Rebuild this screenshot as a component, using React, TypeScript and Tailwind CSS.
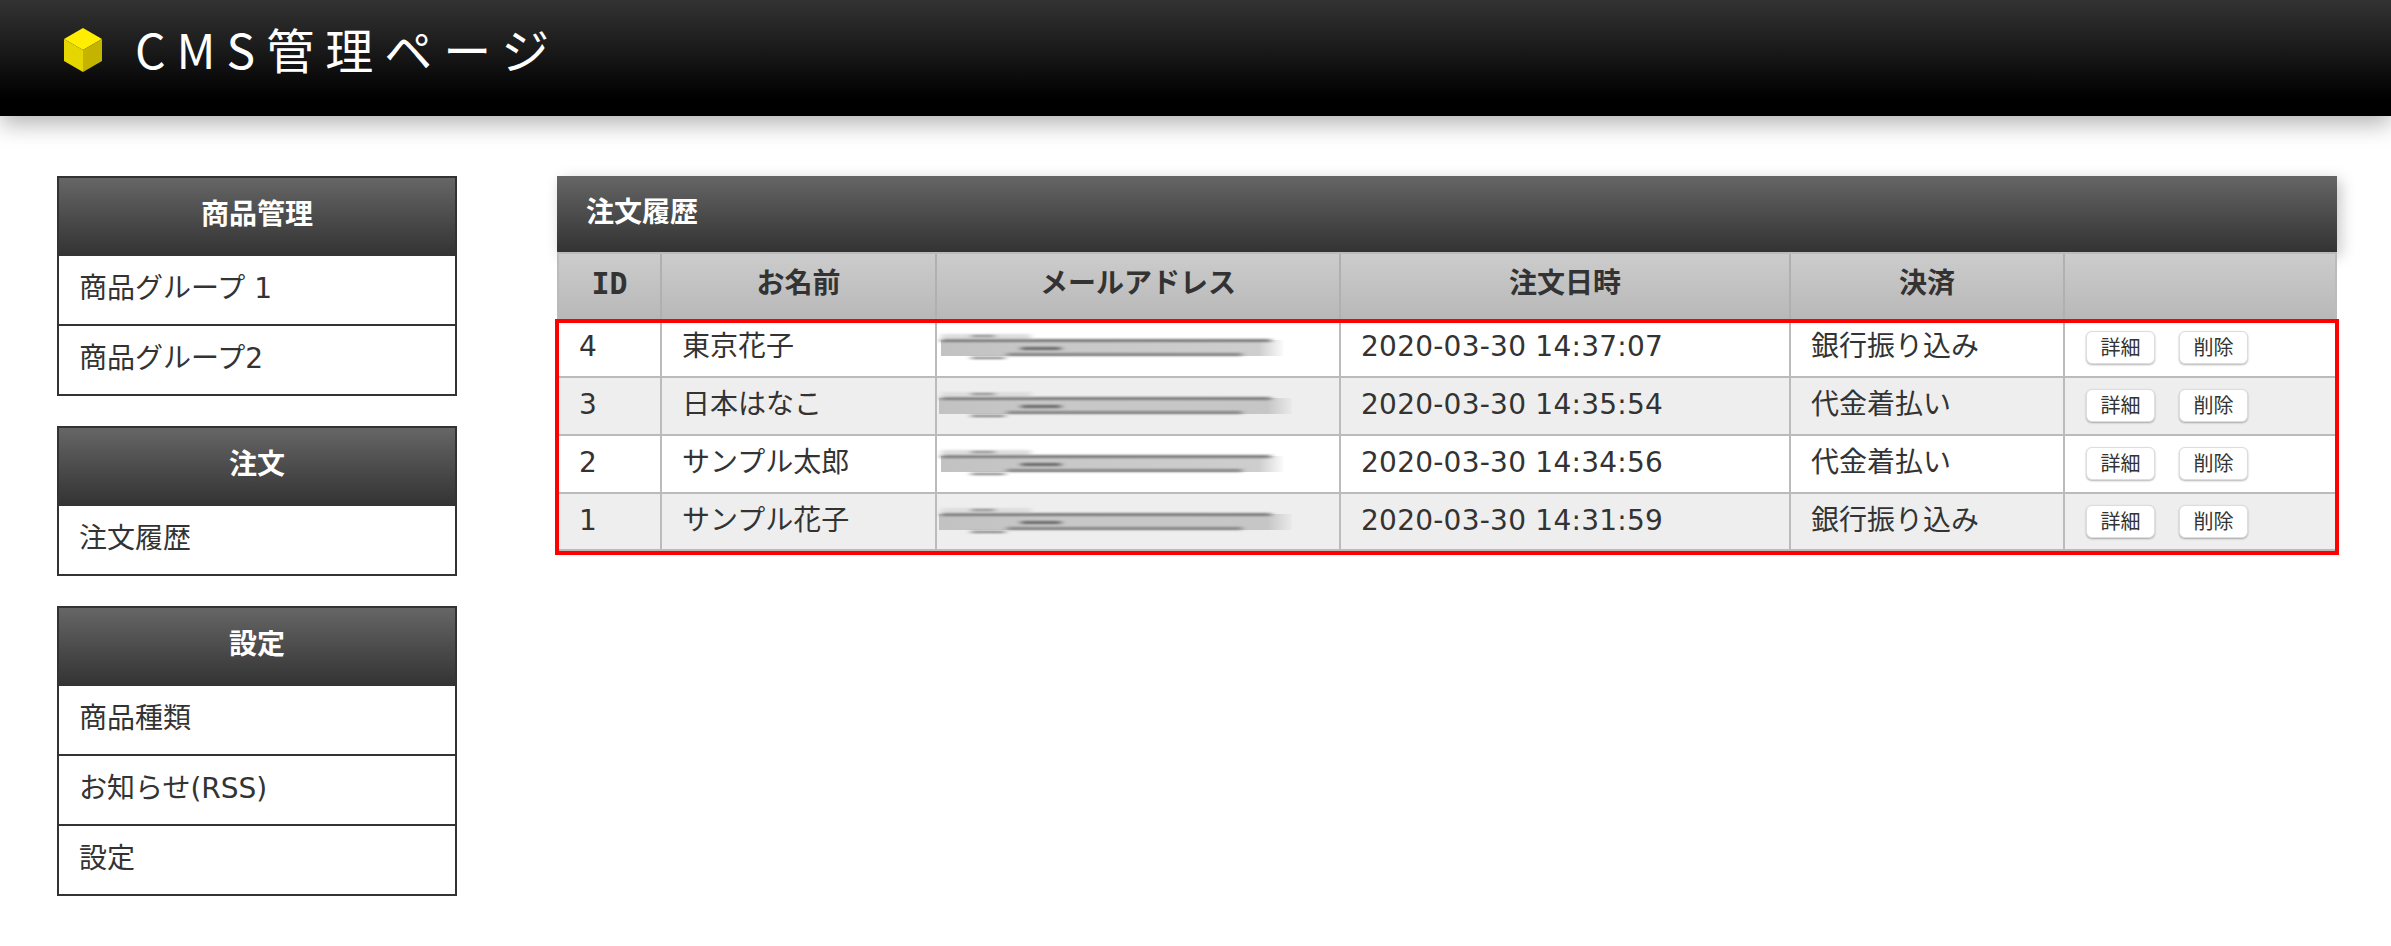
const FONT = "font-['DejaVu_Sans','Noto_Sans_CJK_JP',sans-serif]";

const menus = [
  { title: "商品管理", items: ["商品グループ 1", "商品グループ2"] },
  { title: "注文", items: ["注文履歴"] },
  { title: "設定", items: ["商品種類", "お知らせ(RSS)", "設定"] },
];

const orders = [
  { id: 4, name: "東京花子", date: "2020-03-30 14:37:07", pay: "銀行振り込み" },
  { id: 3, name: "日本はなこ", date: "2020-03-30 14:35:54", pay: "代金着払い" },
  { id: 2, name: "サンプル太郎", date: "2020-03-30 14:34:56", pay: "代金着払い" },
  { id: 1, name: "サンプル花子", date: "2020-03-30 14:31:59", pay: "銀行振り込み" },
];

const COLS = "grid grid-cols-[103px_275px_404px_450px_274px_274px]";
const ROW_HEIGHT = ["h-[55px]", "h-[58px]", "h-[58px]", "h-[57px]"];

function Cube() {
  return (
    <svg width="40" height="44" viewBox="0 0 40 44" className="shrink-0 blur-[0.7px]">
      <polygon points="20,0 39,11 20,22 1,11" fill="#ffee00" />
      <polygon points="1,11 20,22 20,44 1,33" fill="#e6d600" />
      <polygon points="39,11 20,22 20,44 39,33" fill="#c4b400" />
    </svg>
  );
}

// 個人情報をぼかしたメールアドレス欄
function BlurredMail({ shaded }: { shaded: boolean }) {
  const fade = shaded ? "mailfade2" : "mailfade";
  return (
    <svg width="362" height="30" viewBox="0 0 362 30" className="block">
      <defs>
        <filter id="mailblur" x="-3%" y="-40%" width="106%" height="180%">
          <feGaussianBlur stdDeviation="3 0.9" />
        </filter>
        <linearGradient id={fade}>
          <stop offset="0" stopColor="#c2c2c2" />
          <stop offset="0.35" stopColor="#c8c8c8" />
          <stop offset="0.93" stopColor={shaded ? "#c6c6c6" : "#cecece"} />
          <stop offset="1" stopColor={shaded ? "#eaeaea" : "#fafafa"} />
        </linearGradient>
      </defs>
      <rect x={shaded ? 2 : 4} y="8" width={shaded ? 353 : 342} height="16" fill={`url(#${fade})`} />
      <g filter="url(#mailblur)">
        <rect x="4" y="2" width="90" height="5" fill="#dddddd" />
        <rect x="34" y="3" width="24" height="2" fill="#777777" />
        <rect x="4" y="7" width="330" height="3" fill="#7a7a7a" />
        <rect x="84" y="15" width="40" height="3" fill="#666666" />
        <rect x="70" y="21" width="235" height="3" fill="#858585" />
        <rect x="34" y="25" width="34" height="2" fill="#777777" />
      </g>
    </svg>
  );
}

export default function App() {
  return (
    <div className={`min-h-[946px] bg-white text-[28px] leading-none text-[#333] ${FONT}`}>
      <header className="flex h-[116px] items-center gap-[32px] bg-[linear-gradient(#333,#000_86%)] pb-[16px] pl-[63px] shadow-[0_8px_22px_rgba(0,0,0,0.3)]">
        <Cube />
        <h1 className="mb-[4px] font-['Noto_Sans_CJK_JP',sans-serif] text-[48px] font-normal tracking-[11px] text-white">
          CMS管理ページ
        </h1>
      </header>

      <div className="flex items-start pt-[60px] pl-[57px]">
        <nav className="flex w-[400px] shrink-0 flex-col gap-[30px]">
          {menus.map((m) => (
            <section key={m.title} className="border-2 border-[#333]">
              <h2 className="flex h-[78px] items-center justify-center bg-gradient-to-b from-[#666] to-[#333] pb-[4px] font-bold text-white">
                {m.title}
              </h2>
              {m.items.map((item, i) => (
                <div
                  key={item}
                  className={`flex items-center pb-[3px] pl-[20px] ${i > 0 ? "h-[70px] border-t-2 border-[#333]" : "h-[68px]"}`}
                >
                  {item}
                </div>
              ))}
            </section>
          ))}
        </nav>

        <main className="ml-[100px] w-[1780px]">
          <h2 className="flex h-[76px] items-center bg-gradient-to-b from-[#666] to-[#333] pb-[2px] pl-[29px] font-bold text-white shadow-[4px_4px_14px_rgba(0,0,0,0.22)]">
            注文履歴
          </h2>
          <div className={`${COLS} h-[67px] border-x-2 border-t-2 border-[#bbb] bg-gradient-to-b from-[#ccc] to-[#b8b8b8] font-bold`}>
            {["ID", "お名前", "メールアドレス", "注文日時", "決済", ""].map((h, i) => (
              <div
                key={i}
                className={`flex items-center justify-center pb-[6px] ${i < 5 ? "border-r-2 border-[#b0b0b0]" : ""} ${i === 0 ? "font-['DejaVu_Sans_Mono',monospace] text-[30px]" : ""}`}
              >
                {h}
              </div>
            ))}
          </div>
          <div className="-mx-[2px] w-[1784px] border-4 border-[#f00]">
            {orders.map((o, i) => {
              // 1行目は赤枠の下に3px隠れるので中身を持ち上げる
              const lift = i === 0 ? "-mt-[3px]" : "";
              return (
                <div
                  key={o.id}
                  className={`${COLS} ${ROW_HEIGHT[i]} border-b-2 border-[#bbb] ${i % 2 ? "bg-[#eee]" : "bg-white"}`}
                >
                  <Cell lift={lift}>{o.id}</Cell>
                  <Cell lift={lift}>{o.name}</Cell>
                  <div className="border-r-2 border-[#bbb] pt-[12px]">
                    <div className={lift}>
                      <BlurredMail shaded={i % 2 === 1} />
                    </div>
                  </div>
                  <Cell lift={lift}>
                    <span className="tracking-[0.25px]">{o.date}</span>
                  </Cell>
                  <Cell lift={lift}>{o.pay}</Cell>
                  <div className="pt-[11px] pl-[21px]">
                    <div className={`flex gap-[24px] ${lift}`}>
                      <Btn>詳細</Btn>
                      <Btn>削除</Btn>
                    </div>
                  </div>
                </div>
              );
            })}
          </div>
        </main>
      </div>
    </div>
  );
}

function Cell({ children, lift }: { children: React.ReactNode; lift: string }) {
  return (
    <div className="border-r-2 border-[#bbb] pt-[13px] pl-[20px]">
      <div className={lift}>{children}</div>
    </div>
  );
}

function Btn({ children }: { children: React.ReactNode }) {
  return (
    <button className="flex h-[33px] w-[69px] items-center justify-center rounded-[6px] border border-[#ddd] bg-white text-[20px] text-[#333] shadow-[0_1px_2px_rgba(0,0,0,0.3)]">
      {children}
    </button>
  );
}
